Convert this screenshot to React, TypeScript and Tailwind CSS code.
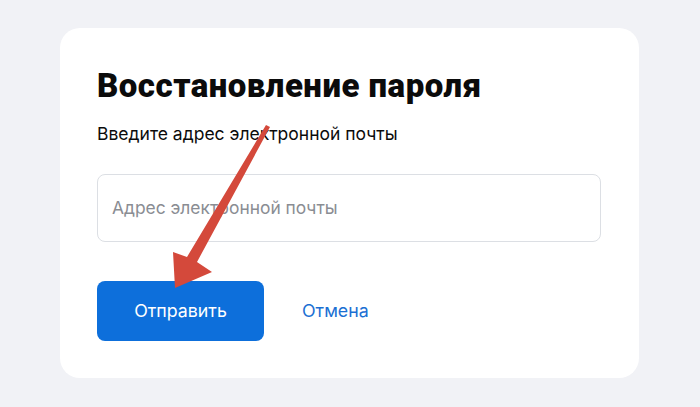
export default function App() {
  return (
    <div className="relative h-[407px] w-[700px] overflow-hidden bg-[#f1f2f6] pt-[28px] pl-[60px] font-['Inter',sans-serif]">
      {/* Card */}
      <div className="h-[350px] w-[579px] rounded-[20px] bg-white pl-[37px] pt-[38px]">
        <h1 className="font-['Roboto',sans-serif] text-[33px] font-black leading-[40px] tracking-[0.5px] text-[#0b0b0b]">
          Восстановление пароля
        </h1>
        <p className="mt-[16px] text-[17.5px] leading-[24px] text-[#0b0b0b]">
          Введите адрес электронной почты
        </p>
        <div className="mt-[28px] flex h-[68px] w-[504px] items-center rounded-[8px] border border-[#dcdfe4] pl-[14px]">
          <span className="text-[17.4px] text-[#8a8d93]">Адрес электронной почты</span>
        </div>
        <div className="mt-[39px] flex items-center">
          <button className="h-[60px] w-[167px] rounded-[8px] bg-[#0d6fdb] text-[17.8px] text-white">
            Отправить
          </button>
          <span className="ml-[38px] text-[17.8px] text-[#1a6fd3]">Отмена</span>
        </div>
      </div>

      {/* Annotation arrow */}
      <svg className="pointer-events-none absolute left-0 top-0" width="700" height="407" viewBox="0 0 700 407">
        <polygon
          points="266,125 270,127 197,262 212,272 175,288 173,252 187,257"
          fill="#d4493b"
        />
      </svg>
    </div>
  )
}
